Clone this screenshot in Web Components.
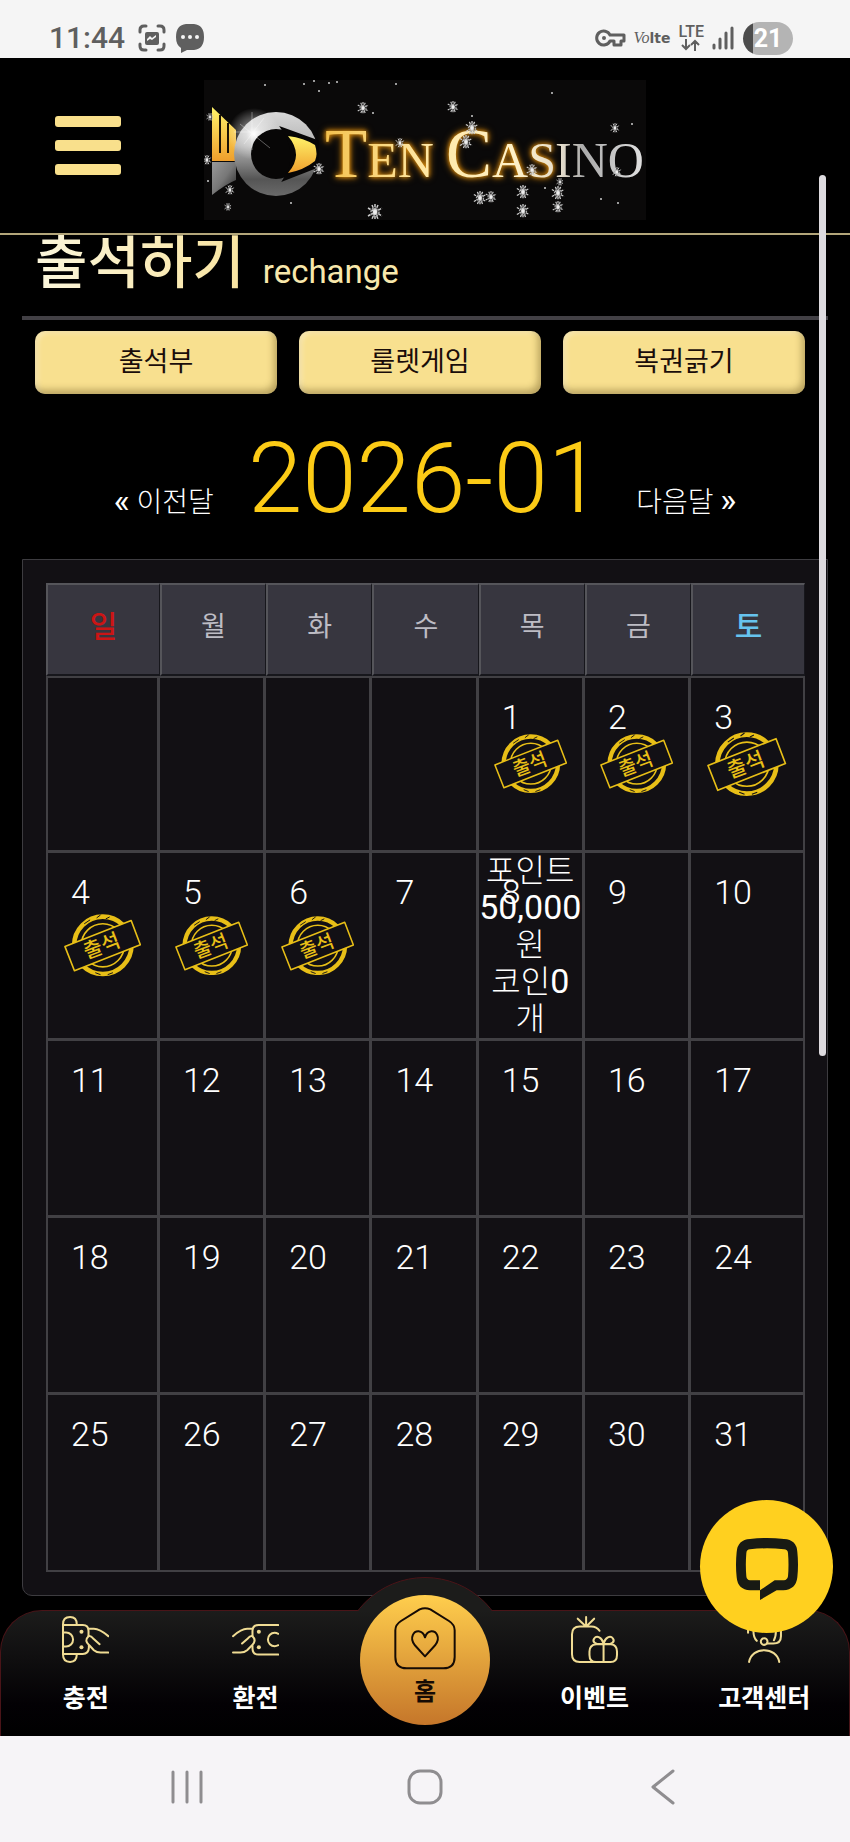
<!DOCTYPE html>
<html lang="ko">
<head>
<meta charset="UTF-8">
<meta name="viewport" content="width=device-width, initial-scale=1.0">
<title>TEN CASINO</title>
<style>
    body {
        margin: 0;
        background: #000;
        color: #fff;
        font-family: Roboto, "Noto Sans CJK KR", sans-serif;
    }
</style>
</head>
<body>
<casino-app>
    <status-bar slot="status"></status-bar>
    <app-header slot="header"></app-header>
    <page-title subtitle="rechange">출석하기</page-title>
    <tab-buttons>
        <tab-button>출석부</tab-button>
        <tab-button>룰렛게임</tab-button>
        <tab-button>복권긁기</tab-button>
    </tab-buttons>
    <month-switcher month="2026-01"></month-switcher>
    <attendance-calendar first-day="4" days="31" attended="1,2,3,4,5,6" reward-day="8"></attendance-calendar>
    <bottom-nav slot="nav"></bottom-nav>
    <system-nav slot="system"></system-nav>
</casino-app>

<script>
class CasinoApp extends HTMLElement {
    connectedCallback() {
        this.attachShadow({ mode: 'open' });
        this.shadowRoot.innerHTML = `
            <style>
                :host {
                    display: flex;
                    flex-direction: column;
                    min-height: 100vh;
                    position: relative;
                }
                main {
                    flex: 1;
                    overflow: hidden;
                    padding: 0 22px 14px;
                }
                .scroll-thumb {
                    position: absolute;
                    top: 175px;
                    right: 24px;
                    width: 7px;
                    height: 881px;
                    border-radius: 4px;
                    background: #dedbdf;
                }
            </style>
            <slot name="status"></slot>
            <slot name="header"></slot>
            <main><slot></slot></main>
            <slot name="nav"></slot>
            <slot name="system"></slot>
            <div class="scroll-thumb"></div>
        `;
    }
}

class StatusBar extends HTMLElement {
    connectedCallback() {
        this.attachShadow({ mode: 'open' });
        this.shadowRoot.innerHTML = `
            <style>
                :host {
                    display: flex;
                    align-items: center;
                    justify-content: space-between;
                    height: 58px;
                    padding: 18px 57px 0 49px;
                    box-sizing: border-box;
                    background: #f5f5f5;
                    color: #5f5f5f;
                }
                div {
                    display: flex;
                    align-items: center;
                }
                svg {
                    display: block;
                }
                .left {
                    gap: 10px;
                }
                .right {
                    gap: 8px;
                }
                time {
                    font-size: 30px;
                    font-weight: 500;
                    line-height: 36px;
                    margin-right: 3px;
                }
                .volte {
                    font: bold 14px/20px "DejaVu Sans", sans-serif;
                }
                .volte i {
                    font: italic 16px/20px "Liberation Serif", serif;
                }
                .net {
                    flex-direction: column;
                    font-size: 16px;
                    font-weight: 500;
                    line-height: 14px;
                }
                .battery {
                    justify-content: center;
                    width: 50px;
                    height: 33px;
                    border-radius: 17px;
                    background: linear-gradient(90deg, #4c4c4c 10px, #b4b4b4 10px);
                    color: #fff;
                    font-size: 25px;
                    font-weight: 700;
                }
            </style>
            <div class="left">
                <time>11:44</time>
                <svg width="28" height="28" viewBox="0 0 28 28" fill="none" stroke="#5f5f5f" stroke-width="3" stroke-linecap="round">
                    <path d="M2 8V6Q2 2 6 2H8M20 2H22Q26 2 26 6V8M26 20V22Q26 26 22 26H20M8 26H6Q2 26 2 22V20"/>
                    <rect x="7" y="8" width="14" height="13" rx="2" fill="#5f5f5f" stroke="none"/>
                    <path d="M9 15L12 12L14 14L18 11V13L14 16L12 15L9 17Z" fill="#f5f5f5" stroke="none"/>
                </svg>
                <svg width="28" height="29" viewBox="0 0 28 29">
                    <path d="M10 0H18Q28 1 28 13Q28 25 18 26H11L5 29L5 24Q0 21 0 13Q0 1 10 0Z" fill="#5f5f5f"/>
                    <g fill="#f5f5f5"><circle cx="7" cy="13" r="2"/><circle cx="14" cy="13" r="2"/><circle cx="21" cy="13" r="2"/></g>
                </svg>
            </div>
            <div class="right">
                <svg width="31" height="18" viewBox="0 0 31 18" fill="none" stroke="#5f5f5f" stroke-width="3">
                    <path d="M15 6A7 7 0 1 0 15 12H19V16H26V12H29V6Z" stroke-linejoin="round"/>
                    <circle cx="9" cy="9" r="2" fill="#5f5f5f" stroke="none"/>
                </svg>
                <span class="volte"><i>Vo</i>lte</span>
                <div class="net">LTE
                    <svg width="20" height="12" viewBox="0 0 20 12" fill="none" stroke="#5f5f5f" stroke-width="2"><path d="M5 0V10M1 6L5 10L9 6M14 12V2M10 6L14 2L18 6"/></svg>
                </div>
                <svg width="23" height="24" viewBox="0 0 23 24" fill="none" stroke="#5f5f5f" stroke-width="3" stroke-linecap="round">
                    <path d="M2 19V22M8 13V22M14 7V22M20 2V22"/>
                </svg>
                <div class="battery">21</div>
            </div>
        `;
    }
}

class AppHeader extends HTMLElement {
    connectedCallback() {
        // x, y, radius of every snowflake on the logo
        const flakes = [[159,28,6],[171,132,8],[115,89,6],[26,110,5],[24,127,4],[6,37,4],[3,80,5],[196,63,5],
            [249,27,6],[268,48,7],[262,62,7],[411,48,5],[328,90,6],[413,92,5],[276,118,7],[287,117,6],
            [319,112,7],[319,131,7],[354,113,7],[354,127,6],[356,102,4]];
        const dots = [[100,4],[110,1],[125,3],[133,2],[115,11],[192,4],[61,5],[169,33],[87,123],[348,13],
            [268,36],[428,44],[397,119],[414,123],[341,108],[4,101]];
        const flakeSvg = flakes.map(([x, y, r]) => `<use href="#flake" x="${x - r}" y="${y - r}" width="${r * 2}" height="${r * 2}"/>`).join('');
        const dotSvg = dots.map(([x, y]) => `<circle cx="${x}" cy="${y}" r="1"/>`).join('');

        this.attachShadow({ mode: 'open' });
        this.shadowRoot.innerHTML = `
            <style>
                :host {
                    display: grid;
                    grid-template-columns: 1fr auto 1fr;
                    align-items: center;
                    height: 177px;
                    padding: 0 55px;
                    box-sizing: border-box;
                    border-bottom: 2px solid #b3a67a;
                    background: #000;
                }
                button {
                    display: grid;
                    gap: 13px;
                    width: 66px;
                    padding: 0;
                    border: 0;
                    background: none;
                }
                button span {
                    height: 11px;
                    border-radius: 3px;
                    background: #f9e08c;
                }
                svg {
                    display: block;
                    margin-top: 9px;
                }
                text {
                    font-family: "Liberation Serif", serif;
                    font-size: 50px;
                    fill: url(#word);
                }
                .glow {
                    filter: drop-shadow(0 0 2px #e0920f) drop-shadow(0 0 3px #b06c08);
                }
            </style>
            <button aria-label="메뉴"><span></span><span></span><span></span></button>
            <svg width="442" height="140" viewBox="0 0 442 140">
                <defs>
                    <linearGradient id="gold" x1="0" y1="0" x2="0" y2="1">
                        <stop offset="0" stop-color="#fff36a"/><stop offset="1" stop-color="#ef9f2c"/>
                    </linearGradient>
                    <linearGradient id="silver" x1="0" y1="0" x2="1" y2="1">
                        <stop offset="0" stop-color="#999"/><stop offset=".5" stop-color="#777"/><stop offset="1" stop-color="#222"/>
                    </linearGradient>
                    <linearGradient id="ring" x1="0" y1="0" x2="0" y2="1">
                        <stop offset="0" stop-color="#d8d8d8"/><stop offset=".4" stop-color="#b4b4b4"/><stop offset=".8" stop-color="#555"/><stop offset="1" stop-color="#6a6a6a"/>
                    </linearGradient>
                    <linearGradient id="word" gradientUnits="userSpaceOnUse" x1="120" y1="0" x2="436" y2="0">
                        <stop offset="0" stop-color="#f3c04c"/><stop offset=".3" stop-color="#ffe6a0"/><stop offset=".6" stop-color="#fff1c8"/><stop offset=".75" stop-color="#e4dccb"/><stop offset=".82" stop-color="#aaa"/><stop offset="1" stop-color="#ddd"/>
                    </linearGradient>
                    <radialGradient id="flare">
                        <stop offset="0" stop-color="#fff"/><stop offset=".3" stop-color="#fff" stop-opacity=".5"/><stop offset="1" stop-color="#fff" stop-opacity="0"/>
                    </radialGradient>
                    <symbol id="flake" viewBox="-8 -8 16 16">
                        <path d="M0 -8V8M-7 -4L7 4M-7 4L7 -4M-3 -7L3 7M3 -7L-3 7" stroke="#ccc" stroke-width="1.5" stroke-dasharray="3 1"/>
                        <circle r="4" fill="none" stroke="#aaa" stroke-width="1.5" stroke-dasharray="2 1"/>
                        <circle r="2" fill="#eee"/>
                    </symbol>
                </defs>
                <rect width="442" height="140" fill="#0a0909"/>
                <path d="M8 82H32V100Q22 104 8 115Z" fill="url(#silver)"/>
                <path d="M8 27L32 50V81H8Z" fill="url(#gold)"/>
                <path d="M16 35V73M24 43V73" stroke="#1a1204" stroke-width="2"/>
                <circle cx="72" cy="74" r="42" fill="url(#ring)"/>
                <circle cx="50" cy="54" r="26" fill="url(#flare)"/>
                <circle cx="72" cy="74" r="25" fill="#070606"/>
                <path d="M80 50L113 62V86L82 98Q96 75 80 50Z" fill="#070606" stroke="#070606" stroke-width="4"/>
                <path d="M84 56Q100 58 111 65Q114 74 111 81Q100 90 84 93Q100 75 84 56Z" fill="url(#gold)"/>
                <path d="M48 32V70M36 44L66 68M30 52H60M60 38L40 64" stroke="#fff" stroke-width="1" opacity=".35"/>
                <text class="glow" x="121" y="97"><tspan font-size="69">T</tspan><tspan>EN</tspan></text>
                <text class="glow" x="242" y="97"><tspan font-size="69">C</tspan><tspan>AS</tspan></text>
                <text x="351" y="97">INO</text>
                ${flakeSvg}
                <g fill="#ccc">${dotSvg}</g>
            </svg>
        `;
    }
}

class PageTitle extends HTMLElement {
    connectedCallback() {
        this.attachShadow({ mode: 'open' });
        this.shadowRoot.innerHTML = `
            <style>
                :host {
                    display: block;
                    margin-top: -11px;
                    padding: 0 13px 4px;
                    border-bottom: 4px solid #424045;
                }
                h1 {
                    display: flex;
                    align-items: baseline;
                    gap: 18px;
                    margin: 0;
                    color: #f8e8ac;
                    font-size: 57px;
                    font-weight: 500;
                    line-height: 80px;
                }
                small {
                    font-size: 33px;
                    font-weight: 400;
                }
                .text {
                    background: linear-gradient(90deg, #fbf6dc, #f9e4a0);
                    -webkit-background-clip: text;
                    background-clip: text;
                    color: transparent;
                }
            </style>
            <h1><span class="text"><slot></slot></span><small>${this.getAttribute('subtitle')}</small></h1>
        `;
    }
}

class TabButtons extends HTMLElement {
    connectedCallback() {
        this.attachShadow({ mode: 'open' });
        this.shadowRoot.innerHTML = `
            <style>
                :host {
                    display: grid;
                    grid-template-columns: repeat(3, 1fr);
                    gap: 22px;
                    padding: 11px 23px 0 13px;
                }
            </style>
            <slot></slot>
        `;
    }
}

class TabButton extends HTMLElement {
    connectedCallback() {
        this.attachShadow({ mode: 'open' });
        this.shadowRoot.innerHTML = `
            <style>
                :host {
                    display: block;
                }
                button {
                    display: block;
                    width: 100%;
                    height: 63px;
                    padding: 0 0 6px;
                    border: 0;
                    border-radius: 10px;
                    background: #f8e08f;
                    box-shadow: inset -3px -4px 7px rgba(90, 70, 20, .4), inset 3px 2px 5px rgba(255, 255, 255, .35);
                    color: #1a0d0a;
                    font-family: inherit;
                    font-size: 27px;
                }
            </style>
            <button><slot></slot></button>
        `;
    }
}

class MonthSwitcher extends HTMLElement {
    connectedCallback() {
        this.attachShadow({ mode: 'open' });
        this.shadowRoot.innerHTML = `
            <style>
                :host {
                    display: flex;
                    align-items: baseline;
                    justify-content: center;
                    gap: 34px;
                    padding: 29px 0 24px;
                }
                a {
                    color: #fff;
                    font-size: 28px;
                    font-weight: 300;
                    line-height: 32px;
                    text-decoration: none;
                }
                b {
                    font-size: 34px;
                    font-weight: 400;
                }
                h2 {
                    margin: 0;
                    color: #fccb16;
                    font-size: 98px;
                    font-weight: 300;
                    line-height: 112px;
                }
            </style>
            <a href="#prev"><b>«</b> 이전달</a>
            <h2>${this.getAttribute('month')}</h2>
            <a href="#next">다음달 <b>»</b></a>
        `;
    }
}

class AttendanceStamp extends HTMLElement {
    connectedCallback() {
        this.attachShadow({ mode: 'open' });
        this.shadowRoot.innerHTML = `
            <style>
                :host {
                    display: block;
                    width: 71%;
                    margin: 0 auto;
                }
                svg {
                    display: block;
                    width: 100%;
                }
                text {
                    font-family: "Noto Sans CJK KR", sans-serif;
                    font-size: 62px;
                    font-weight: 500;
                }
            </style>
            <svg viewBox="0 0 237 192" fill="none" stroke="#e8bf17">
                <circle cx="119" cy="96" r="88" stroke-width="14"/>
                <circle cx="119" cy="96" r="66" stroke-width="5"/>
                <path d="M62 30L80 18M100 12L112 3M140 9L128 15M96 180L112 186M134 186L150 180" stroke="#121015" stroke-width="3"/>
                <path d="M3 100L206 20L234 94L32 174Z" fill="#121015" stroke-width="5" stroke-linejoin="round"/>
                <text x="115" y="118" text-anchor="middle" fill="#e8bf17" stroke="none" transform="rotate(-21 119 96)">출석</text>
            </svg>
        `;
    }
}

class AttendanceCalendar extends HTMLElement {
    connectedCallback() {
        this.attachShadow({ mode: 'open' });
        this.shadowRoot.innerHTML = `
            <style>
                :host {
                    display: block;
                    padding: 23px 22px 23px 23px;
                    border: 1px solid #3d3c40;
                    border-radius: 0 0 10px 10px;
                    background: #121014;
                }
                table {
                    width: 100%;
                    border-spacing: 0;
                    table-layout: fixed;
                }
                .mid {
                    width: 14%;
                }
                th {
                    height: 93px;
                    box-sizing: border-box;
                    padding: 0 0 6px;
                    border: solid;
                    border-width: 2px 1px 2px 2px;
                    border-color: #55555a #17171c #17171c #55555a;
                    background: #37363f;
                    color: #bdbcc4;
                    font-size: 27px;
                    font-weight: 400;
                    line-height: 40px;
                }
                .sun, .sat {
                    font-size: 30px;
                    font-weight: 500;
                }
                .sun {
                    color: #cb1515;
                }
                .sat {
                    color: #66c3ee;
                }
                td {
                    position: relative;
                    height: 177px;
                    box-sizing: border-box;
                    padding: 0;
                    border: solid #414044;
                    border-width: 0 3px 3px 0;
                    text-align: center;
                    vertical-align: middle;
                }
                td:first-child {
                    border-left-width: 2px;
                }
                td:last-child {
                    border-right-width: 2px;
                }
                tbody tr:first-child td {
                    border-top-width: 2px;
                }
                tbody tr:last-child td {
                    border-bottom-width: 2px;
                }
                .day {
                    position: absolute;
                    top: 19px;
                    left: 23px;
                    font-size: 34px;
                    font-weight: 300;
                    line-height: 40px;
                }
                p {
                    margin: 0;
                    font-size: 32px;
                    font-weight: 300;
                    line-height: 37px;
                }
                b {
                    font-size: 34px;
                    font-weight: 400;
                    line-height: 0;
                }
            </style>
            <table>
                <colgroup><col><col class="mid" span="5"><col></colgroup>
                <thead>
                    <tr><th class="sun">일</th><th>월</th><th>화</th><th>수</th><th>목</th><th>금</th><th class="sat">토</th></tr>
                </thead>
                <tbody>${this.renderWeeks()}</tbody>
            </table>
        `;
    }

    renderWeeks() {
        const firstDay = Number(this.getAttribute('first-day'));
        const days = Number(this.getAttribute('days'));
        const attended = this.getAttribute('attended').split(',').map(Number);
        const rewardDay = Number(this.getAttribute('reward-day'));
        let html = '';
        for (let i = 0; i < firstDay + days; i++) {
            const day = i - firstDay + 1;
            if (i % 7 === 0) html += '<tr>';
            html += '<td>';
            if (day > 0) html += `<span class="day">${day}</span>`;
            if (attended.includes(day)) html += '<attendance-stamp></attendance-stamp>';
            if (day === rewardDay) html += '<p>포인트<br><b>50,000</b><br>원<br>코인<b>0</b><br>개</p>';
            html += '</td>';
            if (i % 7 === 6) html += '</tr>';
        }
        return html;
    }
}

class NavItem extends HTMLElement {
    connectedCallback() {
        this.attachShadow({ mode: 'open' });
        this.shadowRoot.innerHTML = `
            <style>
                :host {
                    display: block;
                }
                a {
                    display: flex;
                    flex-direction: column;
                    align-items: center;
                    gap: 18px;
                    padding-top: 5px;
                    color: #fff;
                    font-size: 25px;
                    font-weight: 700;
                    line-height: 36px;
                    text-decoration: none;
                }
                :host([home]) a {
                    position: relative;
                    gap: 4px;
                    width: 130px;
                    height: 130px;
                    margin: -16px auto 0;
                    padding-top: 12px;
                    box-sizing: border-box;
                    border-radius: 50%;
                    background: linear-gradient(#ffce4d, #c5762a);
                    color: #160b04;
                    font-size: 24px;
                }
            </style>
            <a href="#${this.getAttribute('to')}"><slot name="icon"></slot><span><slot></slot></span></a>
        `;
    }
}

class BottomNav extends HTMLElement {
    connectedCallback() {
        this.attachShadow({ mode: 'open' });
        this.shadowRoot.innerHTML = `
            <style>
                :host {
                    display: block;
                    position: relative;
                }
                nav {
                    display: grid;
                    grid-template-columns: repeat(5, 1fr);
                    height: 126px;
                    box-sizing: border-box;
                    border: 1px solid #4a1418;
                    border-bottom: 0;
                    border-radius: 42px 42px 0 0;
                    background: linear-gradient(#1c1c1b, #030104 75%, #000);
                }
                /* only the part of the round hump above the bar is shown */
                .hump {
                    position: absolute;
                    bottom: calc(100% - 1px);
                    left: calc(50% - 85px);
                    width: 170px;
                    height: 34px;
                    overflow: hidden;
                }
                .hump::before {
                    content: "";
                    display: block;
                    height: 170px;
                    box-sizing: border-box;
                    border: 1px solid #4a1418;
                    border-radius: 50%;
                    background: #1c1c1b;
                }
                svg {
                    display: block;
                    fill: none;
                    stroke: #f0dc94;
                    stroke-width: 6;
                    stroke-linecap: round;
                    stroke-linejoin: round;
                }
                .home {
                    stroke: #160b04;
                }
                .dot {
                    fill: #f0dc94;
                    stroke: none;
                }
                .chat {
                    position: absolute;
                    right: 17px;
                    bottom: 103px;
                    display: grid;
                    place-items: center;
                    width: 133px;
                    height: 133px;
                    padding: 4px 0 0;
                    border: 0;
                    border-radius: 50%;
                    background: #ffd01f;
                }
                .chat svg {
                    fill: #181a14;
                    stroke: none;
                }
            </style>
            <div class="hump"></div>
            <nav>
                <nav-item to="charge">
                    <svg slot="icon" width="47" height="47" viewBox="0 0 140 140">
                        <path d="M3 25Q3 3 24 3Q44 3 44 25M3 25V115Q3 137 24 137Q44 137 44 115"/>
                        <path d="M3 27H62Q79 27 79 45V60C68 70 72 78 80 86V95Q79 113 62 113H3M3 49H12A21 21 0 0 1 12 91H3"/>
                        <path d="M79 38H95Q112 38 138 60M79 60Q86 58 92 66L112 84M82 88L95 102Q103 109 115 109H138"/>
                        <circle class="dot" cx="58" cy="47" r="6"/><circle class="dot" cx="58" cy="93" r="6"/>
                    </svg>충전
                </nav-item>
                <nav-item to="exchange">
                    <svg slot="icon" width="47" height="47" viewBox="0 0 140 140">
                        <path d="M138 27H79Q61 27 61 45V60C72 70 68 78 61 86V95Q61 115 79 115H138M138 53Q132 50 127 50A20 20 0 0 0 127 90Q132 90 138 87"/>
                        <path d="M61 38H45Q28 38 3 60M61 60Q54 58 48 66L30 82M59 88L45 102Q37 109 25 109H3"/>
                        <circle class="dot" cx="80" cy="47" r="6"/><circle class="dot" cx="80" cy="93" r="6"/>
                    </svg>환전
                </nav-item>
                <nav-item to="home" home>
                    <svg slot="icon" class="home" width="62" height="63" viewBox="0 0 186 189">
                        <path d="M77 7Q93 0 109 7L165 42Q182 53 182 70V150Q182 184 148 184H38Q4 184 4 150V70Q4 53 21 42Z"/>
                        <path d="M93 148L62 114C45 90 60 72 74 73Q88 75 93 91Q98 75 112 73C126 72 141 90 124 114Z"/>
                    </svg>홈
                </nav-item>
                <nav-item to="event">
                    <svg slot="icon" width="47" height="47" viewBox="0 0 140 140">
                        <path d="M85 44Q77 31 60 31H26Q3 31 3 54V114Q3 137 26 137H75M45 28V3M40 27L20 8M50 27L69 8"/>
                        <path d="M75 84H119Q137 86 137 106V116Q137 137 118 137H75Q55 137 55 116V106Q55 86 75 84M97 84V137"/>
                        <path d="M97 83C70 86 63 76 69 67C77 56 92 64 97 82C102 64 117 56 125 67C131 76 124 86 97 83"/>
                    </svg>이벤트
                </nav-item>
                <nav-item to="support">
                    <svg slot="icon" width="47" height="47" viewBox="0 0 140 140">
                        <path d="M24 137C32 90 106 90 114 137M21 50V35C21 -8 119 -8 119 35V60Q119 82 96 82H78M37 44Q37 65 47 74M104 44Q104 62 98 72"/>
                        <circle cx="69" cy="76" r="10"/>
                    </svg>고객센터
                </nav-item>
            </nav>
            <button class="chat" aria-label="채팅 상담">
                <svg width="62" height="62" viewBox="0 0 186 186">
                    <path fill-rule="evenodd" d="M42 3Q93 -3 144 3Q182 5 184 42Q188 80 184 118Q180 155 142 157H122L72 186V157H42Q5 155 2 118Q-2 80 2 42Q5 5 42 3ZM42 34Q93 28 144 34Q155 34 156 45Q159 80 156 115Q154 126 144 127H116L72 157V127H42Q32 126 31 115Q28 80 31 45Q32 34 42 34Z"/>
                </svg>
            </button>
        `;
    }
}

class SystemNav extends HTMLElement {
    connectedCallback() {
        this.attachShadow({ mode: 'open' });
        this.shadowRoot.innerHTML = `
            <style>
                :host {
                    display: grid;
                    grid-template-columns: repeat(3, 1fr);
                    place-items: center;
                    height: 106px;
                    padding: 0 68px 4px;
                    box-sizing: border-box;
                    background: #f6f4f7;
                }
                button {
                    padding: 0;
                    border: 0;
                    background: none;
                }
                svg {
                    display: block;
                    fill: none;
                    stroke: #8f8d90;
                    stroke-width: 3;
                    stroke-linecap: round;
                    stroke-linejoin: round;
                }
            </style>
            <button aria-label="최근 앱"><svg width="36" height="36" viewBox="0 0 36 36"><path d="M4 3V33M18 3V33M32 3V33"/></svg></button>
            <button aria-label="홈 화면"><svg width="36" height="36" viewBox="0 0 36 36"><rect x="2" y="2" width="32" height="32" rx="11"/></svg></button>
            <button aria-label="뒤로"><svg width="36" height="36" viewBox="0 0 36 36"><path d="M28 2L8 18L28 34"/></svg></button>
        `;
    }
}

customElements.define('casino-app', CasinoApp);
customElements.define('status-bar', StatusBar);
customElements.define('app-header', AppHeader);
customElements.define('page-title', PageTitle);
customElements.define('tab-buttons', TabButtons);
customElements.define('tab-button', TabButton);
customElements.define('month-switcher', MonthSwitcher);
customElements.define('attendance-stamp', AttendanceStamp);
customElements.define('attendance-calendar', AttendanceCalendar);
customElements.define('nav-item', NavItem);
customElements.define('bottom-nav', BottomNav);
customElements.define('system-nav', SystemNav);
</script>
</body>
</html>
